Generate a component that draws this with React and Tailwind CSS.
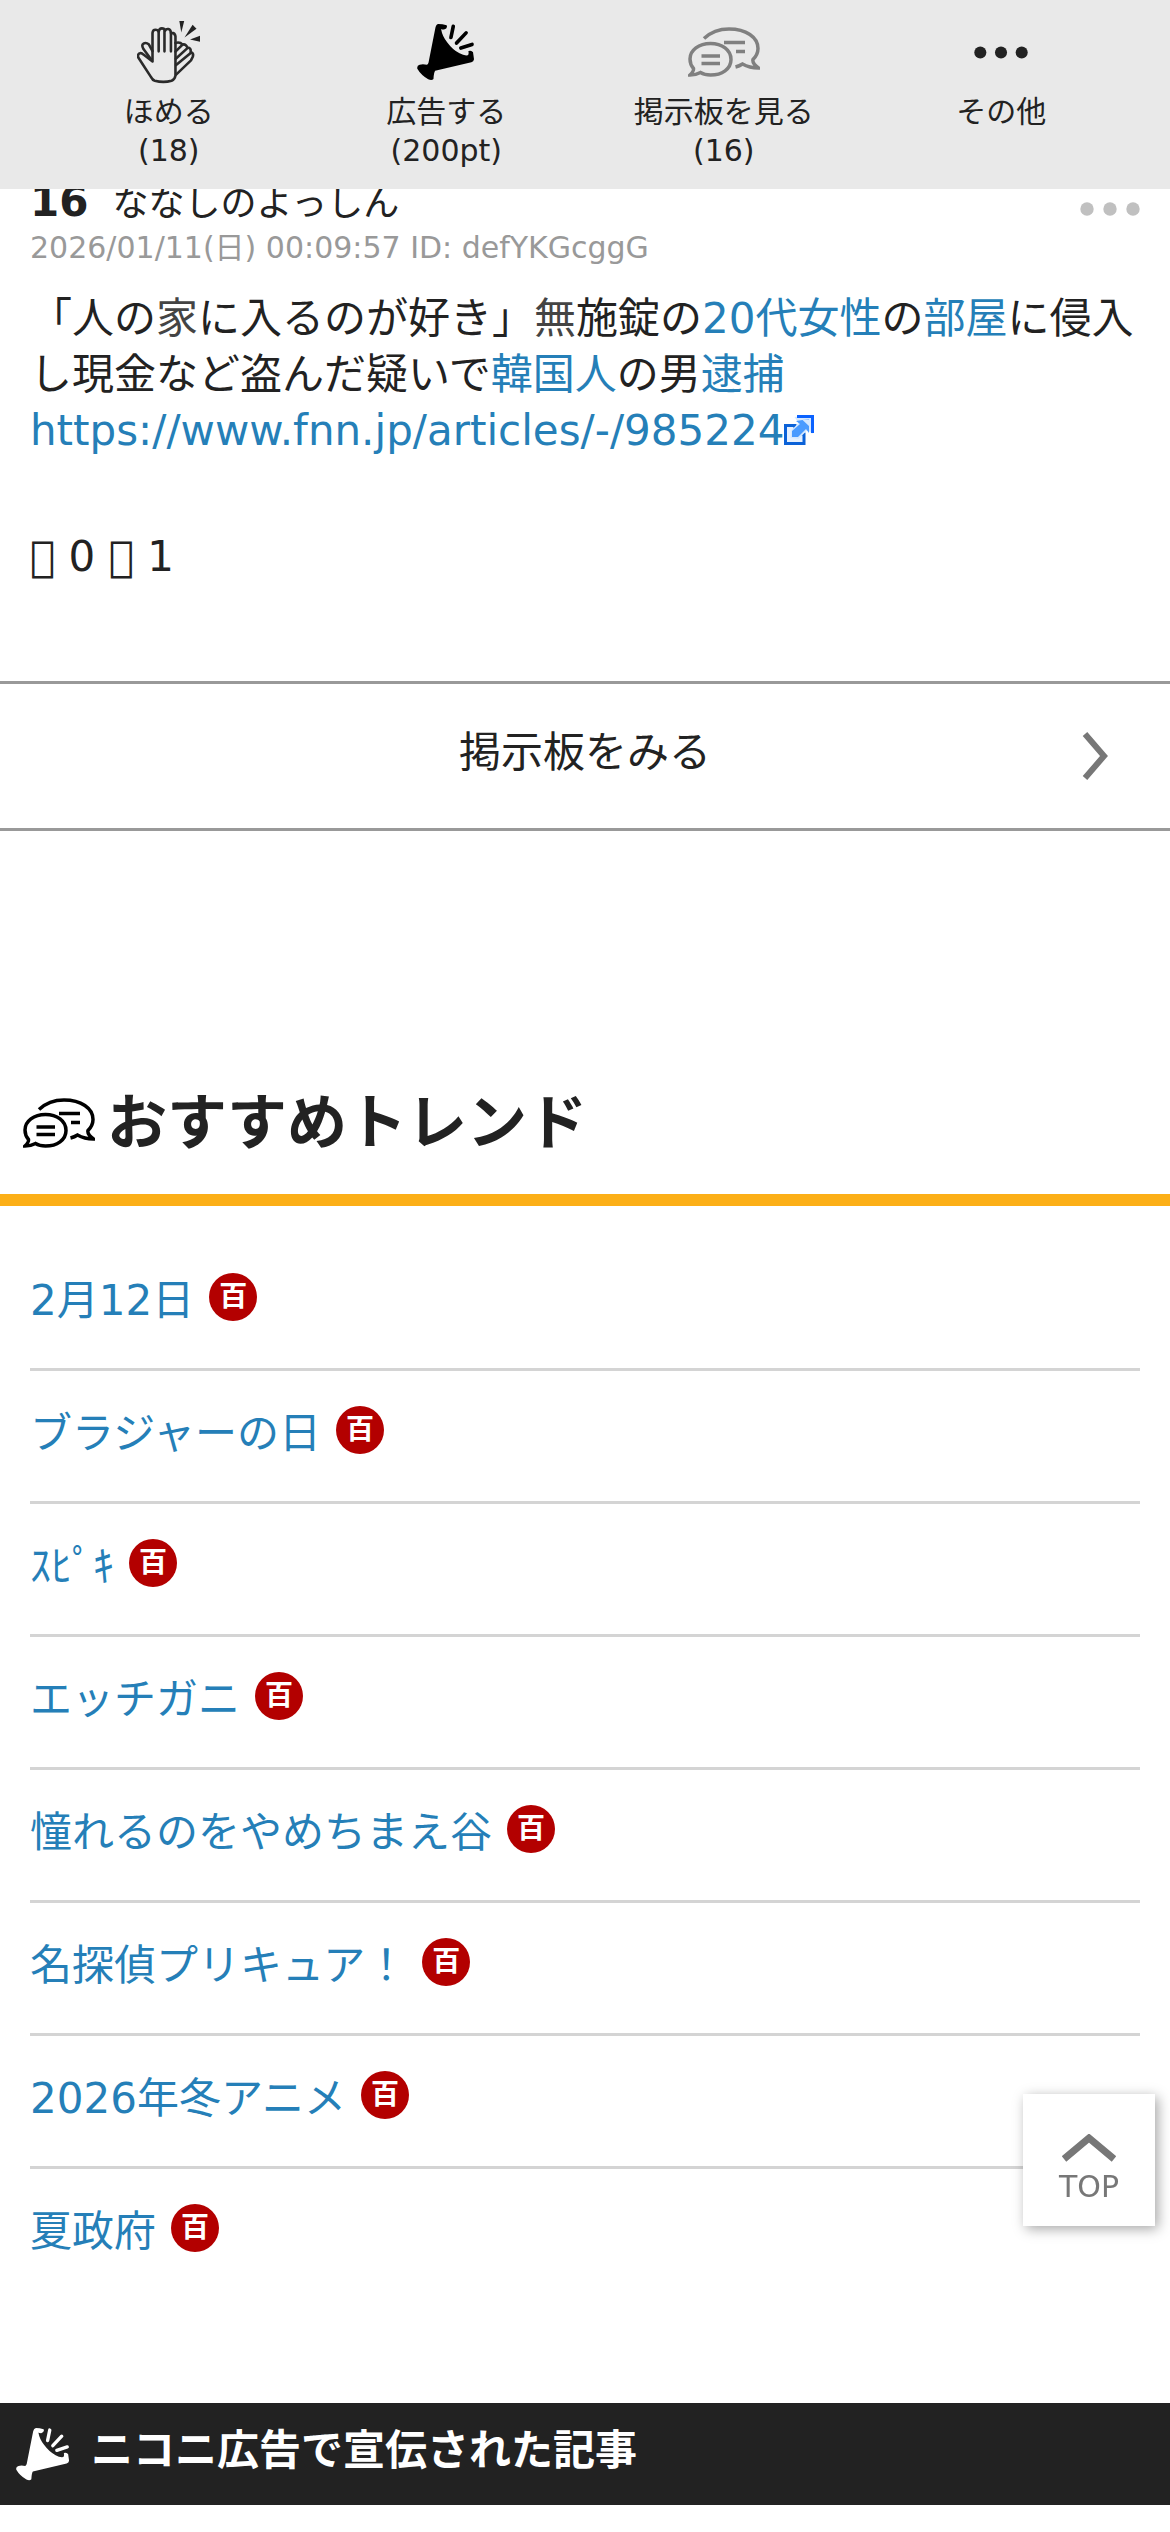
import React from 'react';

const trends = [
  '2月12日',
  'ブラジャーの日',
  'ｽﾋﾟｷ',
  'エッチガニ',
  '憧れるのをやめちまえ谷',
  '名探偵プリキュア！',
  '2026年冬アニメ',
  '夏政府',
];

function ClapIcon() {
  return (
    <svg className="w-16 h-16" viewBox="29 24 198 198" fill="none" stroke="#2a2a2a" strokeWidth="8" strokeLinejoin="round" strokeLinecap="round" aria-hidden="true">
      <path d="M77 152V64q1-10 9-10t10 6q2-10 10-10t10 7q3-6 10-5t8 12q12-1 14 10V196q-2 12-12 16-25 7-52 0-7-2-12-12L33 140q-3-11 5-13 5-2 11 4l28 21" />
      <path d="M96 60v61M114 57v64M134 64v57" />
      <path d="M73 146 49 114q-7-13 0-17 8-5 17 3l11 20" />
      <path d="M148 95q14-4 22 5 9-3 15 9 12 1 10 14 10 3 7 14l-6 12-46 44" />
      <path d="M148 122l22-22M149 144l36-33M150 163l46-38" />
      <g fill="#222" stroke="none">
        <path d="M160 27h15l-9 36z" />
        <path d="M201 39l12 12-37 27z" />
        <path d="M224 73v18l-31-7z" />
      </g>
    </svg>
  );
}

function HornIcon({ className }) {
  return (
    <svg className={className} viewBox="32 32 176 176" fill="currentColor" aria-hidden="true">
      <path d="M97 35q12 0 25 4 4 9-8 13-7 0-9-2 4 23 19 41 16 22 37 33 14 8 25 6 4-2 2-13 10-3 14 4l3 21q-1 7-8 9L87 177q-4 5-5 25-5 6-16 1-22-13-33-32-2-10 7-12 9-3 22 0 4-2 5-7l21-106q2-10 9-11z" />
      <path d="M142 42l-7 34M181 62l-29 31M199 97l-34 11" fill="none" stroke="currentColor" strokeWidth="11" strokeLinecap="round" />
    </svg>
  );
}

function BoardIcon({ className }) {
  return (
    <svg className={className} viewBox="0 0 72 50" fill="none" stroke="currentColor" strokeWidth="3.5" aria-hidden="true">
      <path d="M16 11.500Q26 2 41 2C58 2 70 10 70 21.500q0 6-5 11-1 4 5.500 8.500-9 0-16-4-3 2-7 3" />
      <path d="M12.500 45.500Q8 48 2 48 6 44 5.500 41.500 2 37.500 2 32C2 23 11 16.500 22.500 16.500S43 23 43 32.500 34 48 22.500 48q-6 0-10-2.500z" />
      <path d="M36 15.500h21M48 24.500h9M13.500 29H32M13.500 36.500H32" />
    </svg>
  );
}

function ExternalIcon() {
  return (
    <svg className="inline-block align-baseline w-[30px] h-[30px]" viewBox="0 0 30 30" aria-hidden="true">
      <path d="M1.500 10.500H11V19h9v9.500H1.500z" fill="#e6f1ff" stroke="#0b62d8" strokeWidth="3" />
      <path d="M14.500 1.500h14v17.500l-5-4-9 9-8-1 1-8 7-7-4-6z" fill="#d5e8ff" />
      <path d="M13 1.500h15.500V18" fill="none" stroke="#0b62ff" strokeWidth="3" />
      <path d="M12 6l4 3-8 7v6h6l8-8 3 4V4z" fill="#4a9bff" />
      <path d="M18 4.500h8V12z" fill="#d5e8ff" />
    </svg>
  );
}

function MoreIcon({ className }) {
  return (
    <svg className={className} viewBox="0 0 60 14" fill="currentColor" aria-hidden="true">
      <circle cx="7" cy="7" r="6.700" />
      <circle cx="30" cy="7" r="6.700" />
      <circle cx="53" cy="7" r="6.700" />
    </svg>
  );
}

const actions = [
  { label: 'ほめる', count: '(18)', icon: <ClapIcon /> },
  { label: '広告する', count: '(200pt)', icon: <HornIcon className="w-[58px] h-[58px] text-black" /> },
  { label: '掲示板を見る', count: '(16)', icon: <BoardIcon className="w-[72px] h-[50px] text-[#808080]" /> },
  { label: 'その他', icon: <MoreIcon className="w-[54px] h-[13px]" /> },
];

const Keyword = ({ children }) => (
  <a href="#" className="text-[#257fb8]">{children}</a>
);

export default function App() {
  return (
    <div className="min-h-screen bg-white text-[#222] text-[42px] font-['DejaVu_Sans','Noto_Sans_CJK_JP',sans-serif]" lang="ja">
      <header className="sticky top-0 z-10 bg-[#e9e9e9] px-[30px] pt-5 pb-[19px]">
        <nav className="grid grid-cols-4">
          {actions.map(a => (
            <button key={a.label} type="button" className="flex flex-col items-center text-[30px] leading-[39px] cursor-pointer">
              <span className="h-16 mb-2 flex items-center justify-center">{a.icon}</span>
              <span>{a.label}</span>
              {a.count && <span>{a.count}</span>}
            </button>
          ))}
        </nav>
      </header>

      <main>
        {/* Latest post, partly under the sticky header */}
        <article className="px-[30px] -mt-3">
          <div className="flex items-center justify-between h-[51px]">
            <h3 className="flex items-baseline gap-6 text-[36px] leading-[42px]">
              <span className="font-bold text-[42px]">16</span>
              <span>ななしのよっしん</span>
            </h3>
            <button type="button" aria-label="メニュー" className="pt-3 cursor-pointer">
              <MoreIcon className="w-[60px] h-[14px] text-[#c0c0c0]" />
            </button>
          </div>
          <p className="text-[30px] leading-[39px] text-[#999]">2026/01/11(日) 00:09:57 ID: defYKGcggG</p>
          <p className="mt-6 leading-[56px]">
            「人の<a href="#" className="text-[#444]">家</a>に入るのが好き」<a href="#" className="text-[#444]">無</a>施錠の<Keyword>20代女性</Keyword>の<Keyword>部屋</Keyword>に侵入し現金など盗んだ疑いで<Keyword>韓国人</Keyword>の男<Keyword>逮捕</Keyword>
            <br />
            <Keyword>https://www.fnn.jp/articles/-/985224<ExternalIcon /></Keyword>
          </p>
          <p className="mt-[70px] leading-[56px]">{'\ue8dc'} 0 {'\ue8db'} 1</p>
        </article>

        <a href="#" className="mt-24 h-[150px] pb-2 flex items-center justify-center relative border-y-3 border-[#999]">
          掲示板をみる
          <svg className="absolute right-[61px] top-12 w-[27px] h-12" viewBox="0 0 27 48" fill="none" stroke="#777" strokeWidth="6" aria-hidden="true">
            <path d="M3 2l19 22L3 46" />
          </svg>
        </a>

        <section className="mt-[240px]">
          <h2 className="h-[135px] px-[23px] pb-5 flex items-center gap-3 border-b-12 border-[#fcaf17] text-[60px] font-bold">
            <BoardIcon className="w-[72px] h-[50px] text-black" />
            おすすめトレンド
          </h2>
          <ul className="px-[30px] pt-8">
            {trends.map(t => (
              <li key={t} className="pt-[35px] pb-[47px] flex items-center gap-[15px] border-b-3 border-[#d4d4d4] last:border-b-0">
                <a href="#" className="pt-2 leading-10 text-[#257fb8]">{t}</a>
                <a href="#" className="w-12 h-12 rounded-full bg-[#b30000] text-white text-[28px] leading-[48px] font-bold flex items-center justify-center">百</a>
              </li>
            ))}
          </ul>
        </section>

        <section className="mt-[104px]">
          <h2 className="h-[102px] px-4 flex items-center gap-[21px] bg-[#222] text-white font-bold">
            <HornIcon className="w-[54px] h-[54px]" />
            <span className="pb-2">ニコニ広告で宣伝された記事</span>
          </h2>
        </section>
      </main>

      <a href="#" className="fixed right-[15px] bottom-[306px] w-[132px] h-[132px] pt-4 bg-white text-[#777] flex flex-col items-center justify-center gap-[10px] text-[30px] leading-[30px] shadow-[3px_3px_12px_rgba(0,0,0,0.35)]">
        <svg className="w-[54px] h-7" viewBox="0 0 54 28" fill="none" stroke="currentColor" strokeWidth="7" aria-hidden="true">
          <path d="M2 25L27 4l25 21" />
        </svg>
        TOP
      </a>
    </div>
  );
}
